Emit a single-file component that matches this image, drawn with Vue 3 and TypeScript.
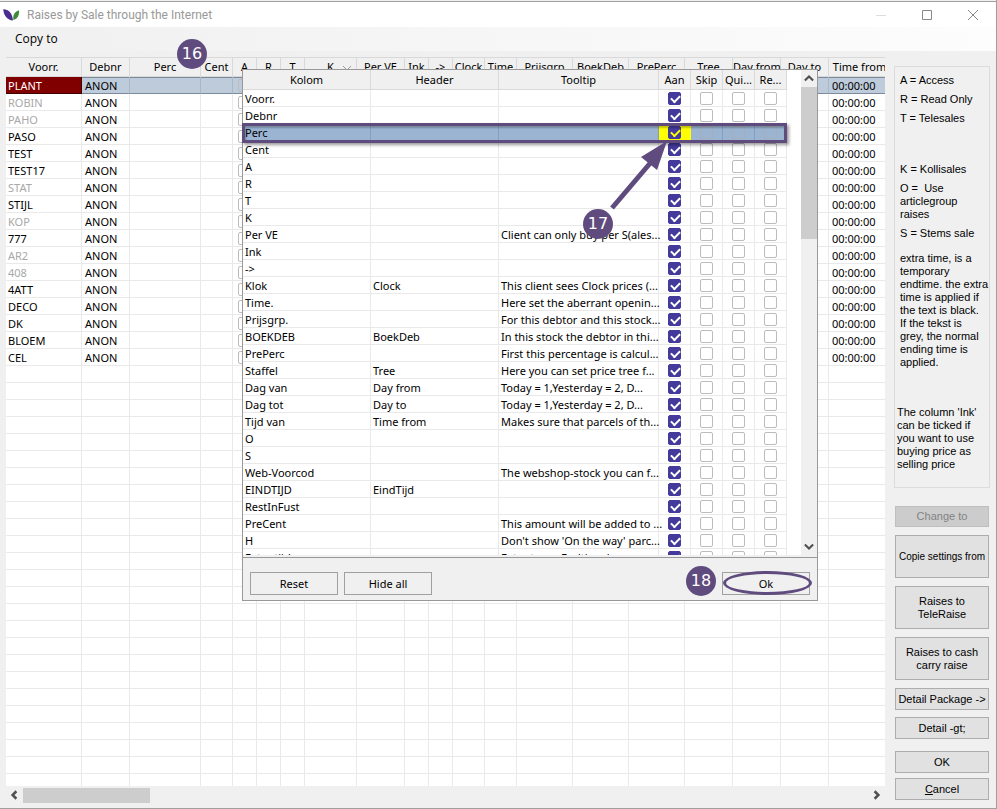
<script setup lang="ts">
interface GridColumn { label: string; width: number; sorted?: boolean }
interface StockRow { code: string; muted?: boolean }
interface FieldRow { name: string; header?: string; tip?: string; current?: boolean }

const columns: GridColumn[] = [
  { label: 'Voorr.', width: 76 },
  { label: 'Debnr', width: 48 },
  { label: 'Perc', width: 71 },
  { label: 'Cent', width: 32 },
  { label: 'A', width: 24 },
  { label: 'R', width: 24 },
  { label: 'T', width: 24 },
  { label: 'K', width: 52, sorted: true },
  { label: 'Per VE', width: 48 },
  { label: 'Ink', width: 24 },
  { label: '->', width: 24 },
  { label: 'Clock', width: 32 },
  { label: 'Time', width: 32 },
  { label: 'Prijsgrp', width: 56 },
  { label: 'BoekDeb', width: 56 },
  { label: 'PrePerc', width: 56 },
  { label: 'Tree', width: 48 },
  { label: 'Day from', width: 48 },
  { label: 'Day to', width: 48 },
  { label: 'Time from', width: 62 },
]

const stocks: StockRow[] = [
  { code: 'PLANT' },
  { code: 'ROBIN', muted: true },
  { code: 'PAHO', muted: true },
  { code: 'PASO' },
  { code: 'TEST' },
  { code: 'TEST17' },
  { code: 'STAT', muted: true },
  { code: 'STIJL' },
  { code: 'KOP', muted: true },
  { code: '777' },
  { code: 'AR2', muted: true },
  { code: '408', muted: true },
  { code: '4ATT' },
  { code: 'DECO' },
  { code: 'DK' },
  { code: 'BLOEM' },
  { code: 'CEL' },
]
const emptyRows = 60

const fields: FieldRow[] = [
  { name: 'Voorr.' },
  { name: 'Debnr' },
  { name: 'Perc', current: true },
  { name: 'Cent' },
  { name: 'A' },
  { name: 'R' },
  { name: 'T' },
  { name: 'K' },
  { name: 'Per VE', tip: 'Client can only buy per S(ales...' },
  { name: 'Ink' },
  { name: '->' },
  { name: 'Klok', header: 'Clock', tip: 'This client sees Clock prices (...' },
  { name: 'Time.', tip: 'Here set the aberrant openin...' },
  { name: 'Prijsgrp.', tip: 'For this debtor and this stock...' },
  { name: 'BOEKDEB', header: 'BoekDeb', tip: 'In this stock the debtor in thi...' },
  { name: 'PrePerc', tip: 'First this percentage is calcul...' },
  { name: 'Staffel', header: 'Tree', tip: 'Here you can set price tree f...' },
  { name: 'Dag van', header: 'Day from', tip: 'Today = 1,Yesterday = 2, D...' },
  { name: 'Dag tot', header: 'Day to', tip: 'Today = 1,Yesterday = 2, D...' },
  { name: 'Tijd van', header: 'Time from', tip: 'Makes sure that parcels of th...' },
  { name: 'O' },
  { name: 'S' },
  { name: 'Web-Voorcod', tip: 'The webshop-stock you can f...' },
  { name: 'EINDTIJD', header: 'EindTijd' },
  { name: 'RestInFust' },
  { name: 'PreCent', tip: 'This amount will be added to ...' },
  { name: 'H', tip: "Don't show 'On the way' parc..." },
  { name: 'Extra tijd', tip: 'Extra tracy. Endtime buy...' },
]
const flags = ['Aan', 'Skip', 'Quick', 'Read']
const flagLabels = ['Aan', 'Skip', 'Qui...', 'Re...']
</script>

<template>
  <div class="window">
    <header class="titlebar">
      <svg class="logo" viewBox="0 0 18 14" aria-hidden="true">
        <path d="M0.300 0.800C5 0.500 10 4 10.500 12.800C5 12.500 0.500 7.500 0.300 0.800Z" fill="#4a2d91" />
        <path d="M17 2C17.500 7.500 15 11.500 11 12.300C10.300 7.500 12 3.500 17 2Z" fill="#3c8a35" />
      </svg>
      <h1>Raises by Sale through the Internet</h1>
      <div class="caption-buttons">
        <button type="button" aria-label="Minimize" disabled><svg viewBox="0 0 12 12"><path d="M1 6.500H11" stroke="#ddd" /></svg></button>
        <button type="button" aria-label="Maximize"><svg viewBox="0 0 12 12"><path d="M1.500 1.500H10.500V10.500H1.500Z" stroke="#888" /></svg></button>
        <button type="button" aria-label="Close"><svg viewBox="0 0 12 12"><path d="M1 1L11 11M11 1L1 11" stroke="#888" /></svg></button>
      </div>
    </header>
    <nav class="menubar"><button type="button">Copy to</button></nav>

    <div class="content">
      <main class="main">
        <div class="grid-clip">
          <table class="grid stock">
            <colgroup><col v-for="c in columns" :key="c.label" :style="{ width: c.width + 'px' }"></colgroup>
            <thead>
              <tr>
                <th v-for="c in columns" :key="c.label" scope="col">
                  {{ c.label }}<svg v-if="c.sorted" class="sort" viewBox="0 0 10 6" aria-hidden="true"><path d="M1 1L5 5L9 1" /></svg>
                </th>
              </tr>
            </thead>
            <tbody>
              <tr v-for="(s, i) in stocks" :key="s.code" :class="{ current: i === 0, muted: s.muted }">
                <td class="code">{{ s.code }}</td>
                <td>ANON</td>
                <td></td>
                <td></td>
                <td class="tick"><input type="checkbox" :aria-label="s.code + ' access'"></td>
                <td v-for="n in 14" :key="n"></td>
                <td>00:00:00</td>
              </tr>
              <tr v-for="n in emptyRows" :key="'e' + n"><td v-for="c in columns" :key="c.label"></td></tr>
            </tbody>
          </table>
        </div>
        <div class="hscroll">
          <svg viewBox="0 0 8 8" aria-hidden="true"><path d="M5.500 1L2.500 4L5.500 7" /></svg>
          <div class="track"><div class="thumb"></div></div>
          <svg viewBox="0 0 8 8" aria-hidden="true"><path d="M2.500 1L5.500 4L2.500 7" /></svg>
        </div>
      </main>

      <aside class="side">
        <section class="legend">
          <p>A = Access</p>
          <p>R = Read Only</p>
          <p class="last-access">T = Telesales</p>
          <p>K = Kollisales</p>
          <p>O =&nbsp; Use<br>articlegroup<br>raises</p>
          <p>S = Stems sale</p>
          <p class="extra">extra time, is a<br>temporary<br>endtime. the extra<br>time is applied if<br>the text is black.<br>If the tekst is<br>grey, the normal<br>ending time is<br>applied.</p>
          <p class="ink">The column 'Ink'<br>can be ticked if<br>you want to use<br>buying price as<br>selling price</p>
        </section>
        <button type="button" class="change" disabled>Change to</button>
        <button type="button" class="tall compact">Copie settings from</button>
        <button type="button" class="tall">Raises to<br>TeleRaise</button>
        <button type="button" class="tall">Raises to cash<br>carry raise</button>
        <button type="button">Detail Package -&gt;</button>
        <button type="button">Detail -<u>g</u>t;</button>
        <button type="button" class="confirm">OK</button>
        <button type="button"><u>C</u>ancel</button>
      </aside>
    </div>

    <span class="step step-16">16</span>

    <section class="popup" role="dialog" aria-label="Columns">
      <div class="popup-body">
        <div class="field-clip">
          <table class="grid fields">
            <colgroup><col class="w-name"><col class="w-name"><col class="w-tip"><col v-for="f in flags" :key="f" class="w-flag"></colgroup>
            <thead>
              <tr>
                <th scope="col">Kolom</th><th scope="col">Header</th><th scope="col">Tooltip</th>
                <th v-for="f in flagLabels" :key="f" scope="col">{{ f }}</th>
              </tr>
            </thead>
            <tbody>
              <tr v-for="r in fields" :key="r.name" :class="{ picked: r.current }">
                <td>{{ r.name }}</td><td>{{ r.header }}</td><td>{{ r.tip }}</td>
                <td v-for="(f, i) in flags" :key="f" class="tick" :class="{ on: i === 0 }">
                  <input type="checkbox" :checked="i === 0" :aria-label="r.name + ' ' + f">
                </td>
              </tr>
            </tbody>
          </table>
        </div>
        <div class="vscroll">
          <svg viewBox="0 0 8 8" aria-hidden="true"><path d="M1 5.500L4 2.500L7 5.500" /></svg>
          <div class="track"><div class="thumb"></div></div>
          <svg viewBox="0 0 8 8" aria-hidden="true"><path d="M1 2.500L4 5.500L7 2.500" /></svg>
        </div>
      </div>
      <footer>
        <button type="button">Reset</button>
        <button type="button">Hide all</button>
        <button type="button" class="ok">Ok</button>
      </footer>
      <div class="frame"></div>
      <svg class="arrow" viewBox="0 0 60 72" aria-hidden="true">
        <path d="M2 68L42 21" stroke="#5f4b7d" stroke-width="5" />
        <path d="M57 1L31 17L47 30Z" fill="#5f4b7d" />
      </svg>
      <span class="step step-17">17</span>
      <span class="step step-18">18</span>
      <span class="ring"></span>
    </section>
  </div>
</template>

<style>
body { margin: 0; overflow: hidden; }
</style>

<style scoped>
* { box-sizing: border-box; }
.window {
  position: relative;
  display: flex;
  flex-direction: column;
  height: 100vh;
  padding-top: 1px;
  border: solid #a0a0a0;
  border-width: 0 1px 1px 0;
  background: #f0f0f0;
  font-family: "Noto Sans", Tahoma, sans-serif;
  font-size: 11px;
  color: #000;
}
button { font: inherit; color: inherit; padding: 0; margin: 0; }
.titlebar {
  display: flex;
  align-items: center;
  flex: none;
  height: 26px;
  border-top: 1px solid #a0a0a0;
  background: #fff;
  padding-left: 3px;
}
.logo { width: 17px; height: 14px; }
h1 { flex: 1; margin: 0 0 0 7px; font: 12px/24px Roboto, sans-serif; color: #999; }
.caption-buttons { display: flex; }
.caption-buttons button { width: 46px; height: 24px; border: 0; background: none; }
.caption-buttons svg { width: 12px; height: 12px; fill: none; display: block; margin: auto; }
.menubar { flex: none; height: 24px; background: linear-gradient(90deg, #f0f0f0, #fdfdfd); padding-left: 15px; }
.menubar button { border: 0; background: none; font: 12px/24px "Open Sans", sans-serif; }
.content { display: flex; flex: 1; min-height: 0; padding: 6px 6px 5px; }
.main { display: flex; flex-direction: column; flex: 1; min-width: 0; }
.grid-clip { flex: 1; min-height: 0; overflow: hidden; background: #fff; }

.grid { border-collapse: separate; border-spacing: 0; table-layout: fixed; width: 0; }
.grid th {
  position: relative;
  padding: 0;
  background: #f0f0f0;
  border: solid #d9d9d9;
  border-width: 0 1px 1px 0;
  font-weight: 400;
  white-space: nowrap;
}
.grid td {
  height: 17px;
  padding: 2px 0 0 3px;
  line-height: 14px;
  border: solid #e9e9e9;
  border-width: 0 1px 1px 0;
  white-space: nowrap;
}
.grid td.tick { padding: 0; }
.stock { min-width: 885px; }
.stock th { height: 20px; line-height: 18px; border-top-width: 1px; }
.stock td.code { padding-left: 2px; }
.muted .code { color: #a8a8a8; }
.current td { background: #bdcbda; border-bottom-color: #7c8b9c; border-right-color: #a9b8c8; box-shadow: inset 0 1px #7c8b9c; }
.current td.code { background: #800000; color: #fff; box-shadow: none; border-color: #400000; }
.sort { position: absolute; right: 4px; top: 7px; width: 10px; height: 6px; fill: none; stroke: #999; }

input[type="checkbox"] {
  appearance: none;
  display: block;
  width: 13px;
  height: 13px;
  margin: 2px auto 1px;
  border: 1px solid #bcbcbc;
  border-radius: 2px;
  background: transparent;
}
input[type="checkbox"]:checked { border-color: #443a9c; background: #443a9c; }
input[type="checkbox"]:checked::before {
  content: "";
  display: block;
  width: 7px;
  height: 4px;
  margin: 3px 0 0 2px;
  border: solid #fff;
  border-width: 0 0 2px 2px;
  transform: translateY(-1px) rotate(-45deg);
}

.hscroll { display: flex; align-items: center; flex: none; height: 16px; margin-top: 1px; }
.hscroll svg { flex: none; width: 17px; height: 10px; fill: none; stroke: #505050; stroke-width: 2; }
.track { flex: 1; }
.hscroll .thumb { width: 15%; height: 15px; background: #cdcdcd; }

.side {
  display: flex;
  flex-direction: column;
  flex: none;
  width: 105px;
  padding-left: 9px;
  font-family: "Liberation Sans", Arial, sans-serif;
  font-size: 11px;
  line-height: 13px;
  white-space: nowrap;
}
.legend { flex: none; height: 422px; margin: 9px 0 18px; padding: 7px 0 0 5px; border: 1px solid #dcdcdc; }
.legend p { margin: 0 0 6px; }
.legend .last-access { margin-bottom: 38px; }
.legend .extra { margin: 12px 0 37px; }
.legend .ink { margin-left: -3px; }
.side button {
  flex: none;
  height: 22px;
  margin: 0 1px 7px;
  border: 1px solid #adadad;
  background: #e1e1e1;
}
.side .tall { height: 43px; margin-bottom: 8px; }
.side .compact { font-size: 10px; }
.side .change { height: 21px; margin-bottom: 8px; background: #ccc; border-color: #bfbfbf; color: #838383; }
.side .confirm { margin-top: 5px; margin-bottom: 5px; }

.popup {
  position: absolute;
  left: 242px;
  top: 69px;
  width: 576px;
  border: 1px solid #999;
  background: #f0f0f0;
}
.popup-body { display: flex; height: 485px; background: #fff; }
.field-clip { flex: 1; overflow: hidden; }
.fields { width: 544px; }
.fields th { height: 20px; line-height: 19px; }
.fields td { padding-left: 2px; }
.w-name { width: 128px; }
.w-tip { width: 160px; }
.w-flag { width: 32px; }
.grid .picked td { background: #9bb4d1; border-color: #879fbb; }
.picked input { border-color: #a8aeb6; }
.grid .picked td.on { background: #ff0; border-color: #ff0; }
.picked input[type="checkbox"]:checked::before { border-color: #ff0; }
.vscroll { display: flex; flex-direction: column; width: 16px; background: #f0f0f0; }
.vscroll svg { flex: none; width: 16px; height: 17px; padding: 3px 0; fill: none; stroke: #505050; stroke-width: 1.5; }
.vscroll .thumb { height: 152px; background: #cdcdcd; }
.popup footer { display: flex; gap: 6px; margin-top: 2px; padding: 14px 7px 5px; border-top: 1px solid #999; }
.popup footer button { width: 88px; height: 23px; border: 1px solid #a0a0a0; background: #f0f0f0; line-height: 20px; }
.popup footer .ok { margin-left: auto; }

.frame {
  position: absolute;
  left: -1px;
  top: 53px;
  width: 545px;
  height: 20px;
  border: 3px solid #5f4b7d;
  box-shadow: 2px 2px 3px rgba(0, 0, 0, 0.4), inset 1px 2px 2px rgba(0, 0, 0, 0.25);
  pointer-events: none;
}
.arrow { position: absolute; left: 367px; top: 70px; width: 60px; height: 72px; pointer-events: none; }
.step {
  position: absolute;
  width: 30px;
  height: 30px;
  border-radius: 50%;
  background: #5f4b7d;
  color: #fff;
  font: 16px/30px "DejaVu Sans", sans-serif;
  text-align: center;
}
.step-16 { left: 177px; top: 39px; }
.step-17 { left: 340px; top: 139px; }
.step-18 { left: 443px; top: 496px; }
.ring { position: absolute; left: 480px; top: 501px; width: 89px; height: 24px; border: 3px solid #5f4b7d; border-radius: 50%; pointer-events: none; }
</style>
